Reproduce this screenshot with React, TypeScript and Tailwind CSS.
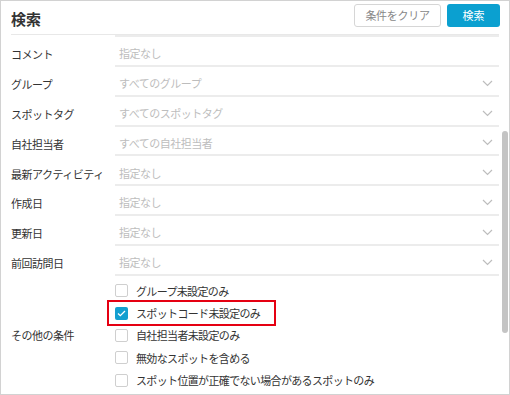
import React from "react";

type Field = {
  label: string;
  placeholder: string;
  select: boolean;
};

const fields: Field[] = [
  { label: "コメント", placeholder: "指定なし", select: false },
  { label: "グループ", placeholder: "すべてのグループ", select: true },
  { label: "スポットタグ", placeholder: "すべてのスポットタグ", select: true },
  { label: "自社担当者", placeholder: "すべての自社担当者", select: true },
  { label: "最新アクティビティ", placeholder: "指定なし", select: true },
  { label: "作成日", placeholder: "指定なし", select: true },
  { label: "更新日", placeholder: "指定なし", select: true },
  { label: "前回訪問日", placeholder: "指定なし", select: true },
];

const options = [
  { text: "グループ未設定のみ", checked: false },
  { text: "スポットコード未設定のみ", checked: true },
  { text: "自社担当者未設定のみ", checked: false },
  { text: "無効なスポットを含める", checked: false },
  { text: "スポット位置が正確でない場合があるスポットのみ", checked: false },
];

const Chevron = () => (
  <svg width="11" height="7" viewBox="0 0 11 7" fill="none">
    <path d="M1 1l4.5 4.5L10 1" stroke="#bdbdbd" strokeWidth="1.2" />
  </svg>
);

const Checkbox = ({ checked }: { checked: boolean }) =>
  checked ? (
    <div className="w-[13px] h-[13px] rounded-[2px] bg-[#129fd0] flex items-center justify-center">
      <svg width="9" height="7" viewBox="0 0 9 7" fill="none">
        <path d="M1 3.5l2.3 2.2L8 1" stroke="#fff" strokeWidth="1.3" />
      </svg>
    </div>
  ) : (
    <div className="w-[13px] h-[13px] rounded-[2px] border border-[#cfcfcf] bg-white" />
  );

export default function App() {
  return (
    <div
      className="w-[510px] h-[395px] border border-[#d2d2d2] bg-white flex flex-col overflow-hidden text-[#333]"
      style={{ fontFamily: '"Noto Sans CJK JP", "Noto Sans", sans-serif' }}
    >
      {/* Header */}
      <div className="flex items-start justify-between pl-[10px] pr-[9px] pt-[3px] h-[33px] shrink-0">
        <h1 className="text-[15px] font-bold leading-[23px] mt-[3px]">検索</h1>
        <div className="flex gap-[6px]">
          <button className="h-[23px] w-[87px] rounded-[3px] border border-[#d6d6d6] bg-white text-[11px] tracking-[-0.3px] text-[#888]">
            条件をクリア
          </button>
          <button className="h-[23px] w-[53px] rounded-[3px] bg-[#0ba0d0] text-[11px] text-white">
            検索
          </button>
        </div>
      </div>

      {/* Body */}
      <div className="flex flex-1 min-h-0">
        <div className="flex-1 pl-[10px] pr-[3px]">
          <div className="border-t border-[#e8e8e8] h-[1px]" />
          <div className="ml-[104px] border-b-2 border-[#ececec]" />
          {fields.map((f) => (
            <div key={f.label} className="flex h-[29.85px]">
              <div className="w-[104px] text-[11px] tracking-[-0.5px] flex items-center pt-[5px] whitespace-nowrap">
                {f.label}
              </div>
              <div className="flex-1 flex items-center justify-between pl-[4px] pr-[6px] pt-[5px] border-b-2 border-[#ececec]">
                <span className="text-[11px] tracking-[-0.5px] text-[#bdbdbd]">{f.placeholder}</span>
                {f.select && <Chevron />}
              </div>
            </div>
          ))}

          <div className="flex items-center pt-[4px]">
            <div className="w-[104px] text-[11px] tracking-[-0.5px]">その他の条件</div>
            <div className="flex flex-col">
              {options.map((o) => (
                <div
                  key={o.text}
                  className={
                    o.checked
                      ? "flex items-center gap-[8px] h-[22.3px] outline-2 outline-[#e50012] outline-offset-0 -ml-[6px] pl-[6px] pr-[14px] w-fit"
                      : "flex items-center gap-[8px] h-[22.3px]"
                  }
                >
                  <Checkbox checked={o.checked} />
                  <span className="text-[11px] tracking-[-0.65px] whitespace-nowrap">{o.text}</span>
                </div>
              ))}
            </div>
          </div>
        </div>

        {/* Scrollbar */}
        <div className="w-[7px] shrink-0 pr-[1px]">
          <div className="mt-[97px] h-[202px] w-[6px] rounded-[3px] bg-[#c4c4c4]" />
        </div>
      </div>
    </div>
  );
}
